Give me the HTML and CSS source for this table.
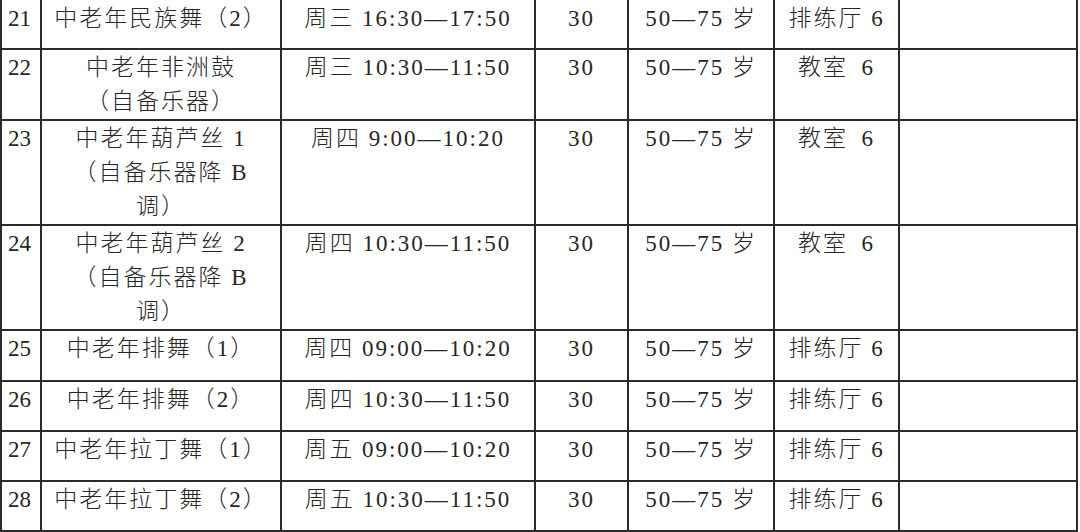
FILE: index.html
```html
<!DOCTYPE html>
<html lang="zh-CN">
<head>
<meta charset="utf-8">
<title>课程表</title>
<link rel="stylesheet" href="styles.css">
</head>
<body>
<table class="schedule">
  <colgroup>
    <col class="c-no">
    <col class="c-name">
    <col class="c-time">
    <col class="c-qty">
    <col class="c-age">
    <col class="c-room">
    <col class="c-note">
  </colgroup>
  <tbody>
    <tr class="r1 tall first">
      <td class="no">21</td><td>中老年民族舞（2）</td><td>周三 16:30—17:50</td><td>30</td><td>50—75 岁</td><td>排练厅 6</td><td></td>
    </tr>
    <tr class="r2">
      <td class="no">22</td><td>中老年非洲鼓<br>（自备乐器）</td><td>周三 10:30—11:50</td><td>30</td><td>50—75 岁</td><td>教室&ensp;6</td><td></td>
    </tr>
    <tr class="r3">
      <td class="no">23</td><td>中老年葫芦丝 1<br>（自备乐器降 B<br>调）</td><td>周四 9:00—10:20</td><td>30</td><td>50—75 岁</td><td>教室&ensp;6</td><td></td>
    </tr>
    <tr class="r3">
      <td class="no">24</td><td>中老年葫芦丝 2<br>（自备乐器降 B<br>调）</td><td>周四 10:30—11:50</td><td>30</td><td>50—75 岁</td><td>教室&ensp;6</td><td></td>
    </tr>
    <tr class="r1 tall">
      <td class="no">25</td><td>中老年排舞（1）</td><td>周四 09:00—10:20</td><td>30</td><td>50—75 岁</td><td>排练厅 6</td><td></td>
    </tr>
    <tr class="r1">
      <td class="no">26</td><td>中老年排舞（2）</td><td>周四 10:30—11:50</td><td>30</td><td>50—75 岁</td><td>排练厅 6</td><td></td>
    </tr>
    <tr class="r1">
      <td class="no">27</td><td>中老年拉丁舞（1）</td><td>周五 09:00—10:20</td><td>30</td><td>50—75 岁</td><td>排练厅 6</td><td></td>
    </tr>
    <tr class="r1">
      <td class="no">28</td><td>中老年拉丁舞（2）</td><td>周五 10:30—11:50</td><td>30</td><td>50—75 岁</td><td>排练厅 6</td><td></td>
    </tr>
  </tbody>
</table>
</body>
</html>
```
FILE: styles.css
```css
html, body {
  margin: 0;
  padding: 0;
  background: #ffffff;
}
body {
  width: 1080px;
  height: 532px;
  overflow: hidden;
}
.schedule {
  border-collapse: collapse;
  table-layout: fixed;
  width: 1078px;
  margin-top: -3px;
  font-family: "Liberation Serif", "Noto Sans CJK SC", serif;
  font-weight: 300;
  font-size: 23px;
  letter-spacing: 2px;
  line-height: 34px;
  color: #262626;
}
.c-no { width: 40px; }
.c-name { width: 240px; }
.c-time { width: 254px; }
.c-qty { width: 93px; }
.c-age { width: 146px; }
.c-room { width: 125px; }
.c-note { width: 178px; }
.schedule td {
  border: 2px solid #2b2b2b;
  padding: 1px 0 0 0;
  text-align: center;
  vertical-align: top;
  white-space: nowrap;
  overflow: hidden;
}
.schedule .first td {
  padding-top: 3px;
}
.schedule td.no {
  text-align: left;
  padding-left: 6px;
  letter-spacing: 0;
}
.r1 { height: 50px; }
.r1.tall { height: 51px; }
.r2 { height: 70px; }
.r3 { height: 105px; }
```
